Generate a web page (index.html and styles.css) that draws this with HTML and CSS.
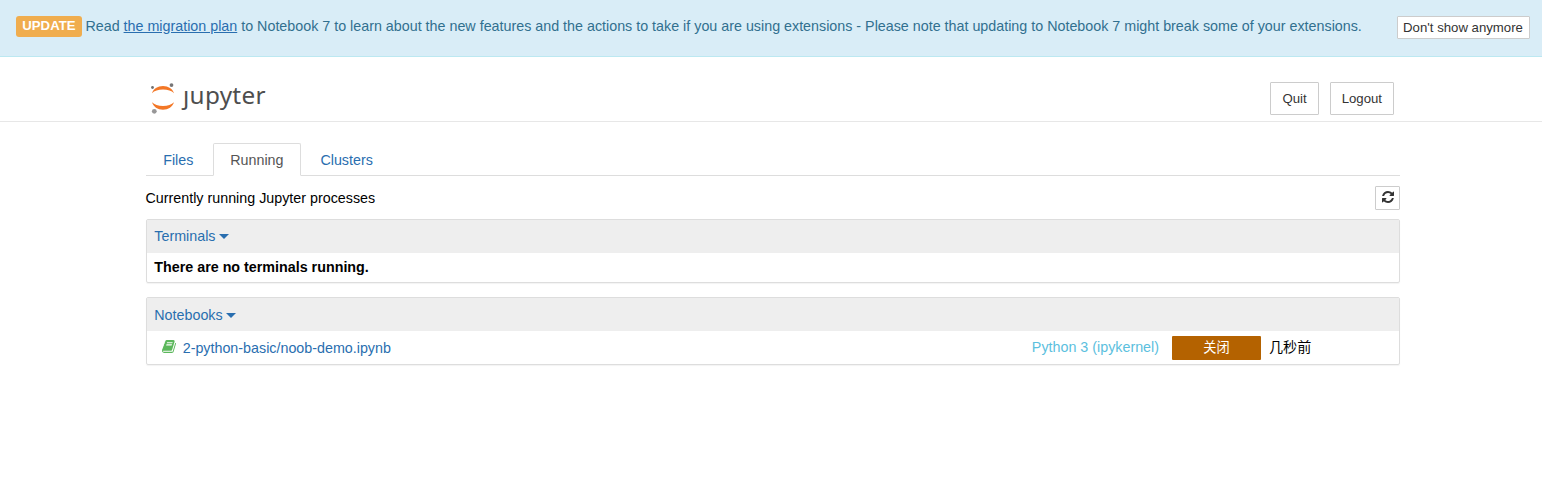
FILE: index.html
```html
<!DOCTYPE html>
<html lang="zh-CN">
<head>
<meta charset="utf-8">
<title>Jupyter</title>
<link rel="stylesheet" href="styles.css">
</head>
<body>
<div class="notice">
  <p class="notice-text"><span class="badge">UPDATE</span> Read <a class="notice-link" href="#">the migration plan</a> to Notebook 7 to learn about the new features and the actions to take if you are using extensions - Please note that updating to Notebook 7 might break some of your extensions.</p>
  <button class="btn btn-dismiss">Don't show anymore</button>
</div>
<header class="header">
  <div class="header-inner">
    <svg class="logo" width="120" height="36" viewBox="0 0 120 36">
      <path d="M6 15.200C7.300 10.800 11.700 7.900 17 7.900s9.700 2.900 11 7.300C25.700 12.900 21.700 11.600 17 11.600S8.300 12.900 6 15.200z" fill="#f37726"/>
      <path d="M6 24.300C7.300 28.700 11.700 31.800 17 31.800s9.700-3.100 11-7.500C25.700 26.600 21.700 28 17 28S8.300 26.600 6 24.300z" fill="#f37726"/>
      <circle cx="6.500" cy="9.500" r="1.400" fill="#6f7070"/>
      <circle cx="25.500" cy="7.100" r="1.900" fill="#767677"/>
      <circle cx="8.300" cy="33.300" r="2.400" fill="#989798"/>
      <text class="logo-text" x="37" y="26" textLength="82.500">ȷupyter</text>
    </svg>
    <div class="header-actions">
      <button class="btn btn-head">Quit</button>
      <button class="btn btn-head">Logout</button>
    </div>
  </div>
</header>
<main class="main">
  <nav class="tabs">
    <a class="tab" href="#">Files</a>
    <a class="tab active" href="#">Running</a>
    <a class="tab" href="#">Clusters</a>
  </nav>
  <div class="toolbar">
    <span>Currently running Jupyter processes</span>
    <button class="btn btn-refresh" aria-label="Refresh"><svg width="12" height="14" viewBox="0 0 1536 1792"><path fill="currentColor" d="M1511 1056q0 5-1 7-64 268-268 434.500t-478 166.500q-146 0-282.500-55t-243.500-157l-129 129q-19 19-45 19t-45-19-19-45v-448q0-26 19-45t45-19h448q26 0 45 19t19 45-19 45l-137 137q71 66 161 102t187 36q134 0 250-65t186-179q11-17 53-117 8-23 30-23h192q13 0 22.500 9.500t9.500 22.500zm25-800v448q0 26-19 45t-45 19h-448q-26 0-45-19t-19-45 19-45l138-138q-148-137-349-137-134 0-250 65t-186 179q-11 17-53 117-8 23-30 23h-199q-13 0-22.500-9.500t-9.500-22.500v-7q65-268 270-434.500t480-166.500q146 0 284 55.500t245 156.500l130-129q19-19 45-19t45 19 19 45z"/></svg></button>
  </div>
  <section class="panel">
    <div class="panel-head"><a href="#">Terminals</a><span class="caret"></span></div>
    <div class="panel-empty">There are no terminals running.</div>
  </section>
  <section class="panel">
    <div class="panel-head panel-head-list"><a href="#">Notebooks</a><span class="caret"></span></div>
    <div class="row">
      <svg class="book" width="14" height="15" viewBox="0 0 1664 1792"><path fill="currentColor" d="M1639 478q40 57 18 129l-275 906q-19 64-76.500 107.500t-122.500 43.500h-923q-77 0-148.500-53.500t-99.500-131.500q-24-67-2-127 0-4 3-27t4-37q1-8-3-21.500t-3-19.500q2-11 8-21t16.500-23.500 16.500-23.500q23-38 45-91.500t30-91.500q3-10 .5-30t-.5-28q3-11 17-28t17-23q21-36 42-92t25-90q1-9-2.500-32t.5-28q4-13 22-30.500t22-22.500q19-26 42.500-84.500t27.500-96.500q1-8-3-25.500t-2-26.500q2-8 9-18t18-23 17-21q8-12 16.500-30.500t15-35 16-36 19.500-32 26.500-23.500 36-11.500 47.500 5.500l-1 3q38-9 51-9h761q74 0 114 56t18 130l-274 906q-36 119-71.500 153.500t-128.500 34.500h-869q-27 0-38 15-11 16-1 43 24 70 144 70h923q29 0 56-15.500t35-41.500l300-987q7-22 5-57 38 15 59 43zm-1064 2q-4 13 2 22.500t20 9.500h608q13 0 25.500-9.500t16.500-22.500l21-64q4-13-2-22.500t-20-9.500h-608q-13 0-25.500 9.500t-16.500 22.500zm-83 256q-4 13 2 22.500t20 9.500h608q13 0 25.500-9.500t16.500-22.500l21-64q4-13-2-22.500t-20-9.500h-608q-13 0-25.500 9.500t-16.500 22.500z"/></svg>
      <a class="row-name" href="#">2-python-basic/noob-demo.ipynb</a>
      <span class="kernel">Python 3 (ipykernel)</span>
      <button class="btn-shutdown">关闭</button>
      <span class="ago">几秒前</span>
    </div>
  </section>
</main>
</body>
</html>
```
FILE: styles.css
```css
* { box-sizing: border-box; }
body {
  margin: 0;
  background: #fff;
  color: #000;
  font: 14.3px/20px "Liberation Sans", Arial, "Noto Sans CJK SC", sans-serif;
}
a { color: #296eaf; text-decoration: none; }
button { font-family: inherit; padding: 0; }

.notice {
  display: flex;
  justify-content: space-between;
  align-items: flex-start;
  height: 57px;
  padding: 16px 12px 0 16px;
  background: #d9edf7;
  border-bottom: 1px solid #bce8f1;
  color: #31708f;
}
.notice-text { margin: 0; white-space: nowrap; }
.notice-link { text-decoration: underline; }
.badge {
  display: inline-block;
  height: 21px;
  margin-right: -.4px;
  padding: 0 6.3px;
  border-radius: 3px;
  background: #f0ad4e;
  color: #fff;
  font-size: 13.2px;
  font-weight: bold;
  line-height: 20px;
  vertical-align: top;
}
.btn {
  background: #fff;
  border: 1px solid #ccc;
  border-radius: 1px;
  color: #333;
}
.btn-dismiss { width: 133px; height: 23px; padding-right: 1px; font-size: 13.2px; }

.header { height: 65px; border-bottom: 1px solid #e7e7e7; }
.header-inner {
  display: flex;
  justify-content: space-between;
  width: 1248px;
  margin-left: 146px;
  padding-top: 21px;
}
.logo-text { font: 24.3px "Noto Sans", sans-serif; fill: #4e4e4e; }
.header-actions { display: flex; gap: 11px; padding-top: 4px; }
.btn-head { height: 33px; padding: 0 11px; font-size: 13.2px; }

.main { width: 1254px; margin: 21px 0 0 146px; }
.tabs { display: flex; height: 33px; border-bottom: 1px solid #ddd; }
.tab {
  height: 33px;
  padding: 6px 16.7px 0 16.2px;
  border: 1px solid transparent;
  border-radius: 2px 2px 0 0;
  margin-right: 2px;
}
.tab.active { background: #fff; border-color: #ddd #ddd #fff; color: #555; }
.toolbar {
  display: flex;
  justify-content: space-between;
  height: 43px;
  margin-left: -.5px;
  padding-top: 10px;
  line-height: 24px;
}
.btn-refresh {
  display: flex;
  align-items: center;
  justify-content: center;
  width: 25px;
  height: 24px;
  padding: 0 0 2px;
}
.panel {
  margin-bottom: 14px;
  border: 1px solid #ddd;
  border-radius: 2px;
  box-shadow: 0 1px 1px rgba(0, 0, 0, .05);
}
.panel-head {
  display: flex;
  align-items: center;
  gap: 3.5px;
  height: 33px;
  padding: 0 0 1px 7.3px;
  background: #eee;
}
.panel-head-list { padding: 1px 0 0 7.3px; }
.caret {
  border: 5px solid transparent;
  border-top-color: #296eaf;
  border-bottom: 0;
}
.panel-empty { height: 29px; padding-left: 7.3px; font-weight: bold; line-height: 28px; }
.row { display: flex; align-items: center; height: 33px; padding-left: 15px; }
.book { color: #5cb85c; margin-bottom: 3px; }
.row-name { margin: 0 auto 0 6.7px; }
.kernel { color: #5bc0de; margin: 0 13px 2px 0; }
.btn-shutdown {
  width: 89px;
  height: 24px;
  padding-bottom: 2px;
  border: 0;
  border-radius: 1px;
  background: #b46200;
  color: #fff;
  font-size: 13.2px;
}
.ago { width: 138px; padding: 0 0 1px 8px; font-size: 14.1px; }
```
